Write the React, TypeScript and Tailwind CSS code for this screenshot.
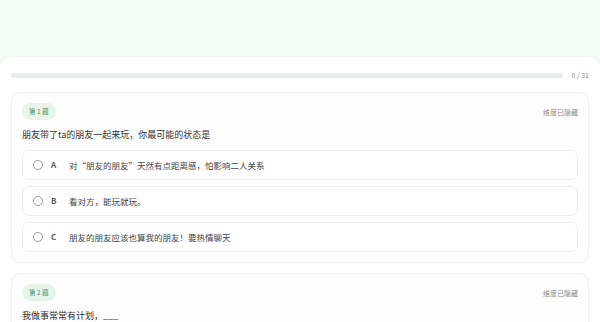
const questions = [
  {
    no: 1,
    title: '朋友带了ta的朋友一起来玩，你最可能的状态是',
    options: [
      { key: 'A', text: '对“朋友的朋友”天然有点距离感，怕影响二人关系' },
      { key: 'B', text: '看对方，能玩就玩。' },
      { key: 'C', text: '朋友的朋友应该也算我的朋友！要热情聊天' },
    ],
  },
  {
    no: 2,
    title: '我做事常常有计划，___',
    options: [
      { key: 'A', text: '非常符合' },
      { key: 'B', text: '比较符合' },
    ],
  },
]

function QuestionCard({ q }: { q: (typeof questions)[number] }) {
  return (
    <section className="rounded-[9px] border border-[#f0f2f0] bg-[#fdfdfd] px-[10px] pt-[10px] pb-[10px] shadow-[0_1px_3px_rgba(0,0,0,0.02)]">
      {/* Header: number badge + hidden dimension hint */}
      <div className="flex items-center justify-between">
        <span className="flex h-[17px] items-center rounded-full bg-[#e8f4ea] px-[7px] text-[6.5px] text-[#4a8a5a]">
          第 {q.no} 题
        </span>
        <span className="mt-[2px] text-[7px] text-[#8a8d8a]">维度已隐藏</span>
      </div>

      <h3 className="mt-[8px] text-[9px] leading-[13px] text-[#333]">{q.title}</h3>

      <div className="mt-[9px] flex flex-col gap-[6px]">
        {q.options.map((o) => (
          <label
            key={o.key}
            className="flex h-[30px] items-center rounded-[7px] border border-[#eceeec] bg-white pl-[10px]"
          >
            <span className="h-[10px] w-[10px] shrink-0 rounded-full border border-[#9a9d9a]" />
            <span className="ml-[8px] w-[10px] text-[8px] font-semibold text-[#555]">{o.key}</span>
            <span className="ml-[8px] text-[8.5px] text-[#444]">{o.text}</span>
          </label>
        ))}
      </div>
    </section>
  )
}

export default function App() {
  return (
    <div
      className="h-[322px] w-[600px] overflow-hidden bg-gradient-to-b from-[#f4fbf4] to-[#f7fcf7]"
      style={{ fontFamily: '"Noto Sans CJK SC", "Noto Sans", sans-serif' }}
    >
      <div className="h-[57px]" />
      <main className="rounded-t-[10px] bg-white px-[11px] pt-[14px] shadow-[0_-1px_3px_rgba(0,0,0,0.03)]">
        {/* Progress */}
        <div className="flex items-center gap-[8px]">
          <div className="h-[5px] flex-1 rounded-full bg-[#eaeceb]" />
          <span className="text-[7px] leading-[9px] text-[#8a8d8a]">0 / 31</span>
        </div>

        <div className="mt-[12px] flex flex-col gap-[10px]">
          {questions.map((q) => (
            <QuestionCard key={q.no} q={q} />
          ))}
        </div>
      </main>
    </div>
  )
}
